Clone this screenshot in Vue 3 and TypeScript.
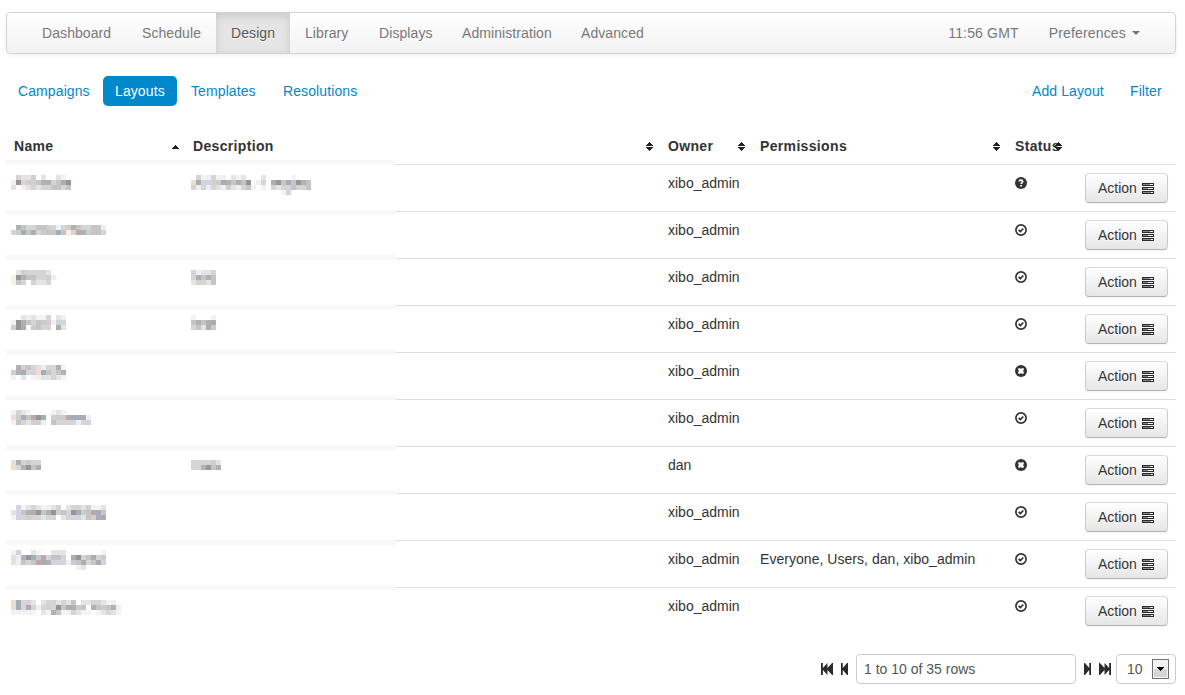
<script setup lang="ts">
interface NavItem { label: string; width: number; active?: boolean }
interface Row { owner: string; permissions: string; status: 'unknown' | 'ok' | 'error' }
interface Mosaic { col: number; row: number; lines: string[] }

const nav: NavItem[] = [
  { label: 'Dashboard', width: 100 },
  { label: 'Schedule', width: 89 },
  { label: 'Design', width: 74, active: true },
  { label: 'Library', width: 74 },
  { label: 'Displays', width: 83 },
  { label: 'Administration', width: 119 },
  { label: 'Advanced', width: 93 },
]
const pills: NavItem[] = [
  { label: 'Campaigns', width: 95 },
  { label: 'Layouts', width: 74, active: true },
  { label: 'Templates', width: 90 },
  { label: 'Resolutions', width: 98 },
]
const columns = [
  { label: 'Name', sort: 'asc' },
  { label: 'Description', sort: 'both' },
  { label: 'Owner', sort: 'both' },
  { label: 'Permissions', sort: 'both' },
  { label: 'Status', sort: 'both' },
  { label: '', sort: '' },
]
const row = (status: Row['status'], owner = 'xibo_admin', permissions = ''): Row => ({ owner, permissions, status })
const rows: Row[] = [
  row('unknown'), row('ok'), row('ok'), row('ok'), row('error'), row('ok'),
  row('error', 'dan'), row('ok'), row('ok', 'xibo_admin', 'Everyone, Users, dan, xibo_admin'), row('ok'),
]

// Obscured names and descriptions, one character per 5px cell.
const palette: Record<string, string> = {
  '1': '#f3f3f3', '2': '#e4e4e5', '3': '#d4d5d6', '4': '#c5c5c6', '5': '#b1b1b2', '6': '#979599',
  r: '#b9a9a8', b: '#a5adb7', p: '#ecdfd1', l: '#d5d3df', w: '#f6f0eb', k: '#d6cccc', g: '#c9cec8', s: '#e9f0f8',
}
const mosaics: Mosaic[] = [
  { col: 1, row: 3, lines: ['.322k.2..21.', 'w6lkk45534r6', '2.w2l2334434'] },
  { col: 37, row: 3, lines: ['.31s3ws.212...2.....1...', 'pb3lkgb54r46.w3.r64b4654', '3w3s32sk2s341.1.323l4334', '..................13....'] },
  { col: 1, row: 13, lines: ['.543344kls3k543344s', '3gb4r3g44b4w3r5g443'] },
  { col: 1, row: 22, lines: ['.2k33332.', 'w654433ks', 'w43.3223.'] },
  { col: 37, row: 22, lines: ['3s223', '35454', '23324'] },
  { col: 1, row: 31, lines: ['..2s2113.2s', 'w65434gks3l', 'k6b.g433.52'] },
  { col: 37, row: 31, lines: ['1...1', '4545b', '342rg'] },
  { col: 1, row: 41, lines: ['.5k4lps3351', 'k5bllpb4345', '1.2.1w22321'] },
  { col: 1, row: 50, lines: ['w321....w21.....', 'pgb4r6b.kggrbbrs', 'w432kks.43333s3l'] },
  { col: 1, row: 60, lines: ['pb3g33', 'p3564b'] },
  { col: 37, row: 60, lines: ['33llk2', '335645'] },
  { col: 1, row: 69, lines: ['.l12321s23.2332k112', '2l45r6456g436bg4rb4', '1l3k33233.233l24kbb'] },
  { col: 1, row: 78, lines: ['13..21..222.......1', 'ps56b4rl443.r634rlg', 'ps434rb5l33sg4r34b3', '.............w2....'] },
  { col: 1, row: 88, lines: ['pb332.2332l24.223321s.', 'pblr3s3kl64r5g4.54g45s', 'w1111.2154113211.12321'] },
]
const cells = mosaics.flatMap((m) =>
  m.lines.flatMap((line, y) =>
    [...line].map((c, x) => ({ x: m.col + x, y: m.row + y, fill: palette[c] })).filter((c) => c.fill),
  ),
)
const bands = [0, 10, 19, 29, 38, 47, 57, 66, 76, 85]
</script>

<template>
  <div class="page">
    <header class="navbar">
      <nav class="menu">
        <a v-for="n in nav" :key="n.label" :class="['menu-item', { active: n.active }]" :style="{ width: n.width + 'px' }">{{ n.label }}</a>
      </nav>
      <div class="menu menu-right">
        <span class="clock">11:56 GMT</span>
        <a class="prefs">Preferences <i class="caret"></i></a>
      </div>
    </header>

    <div class="subnav">
      <a v-for="p in pills" :key="p.label" :class="['pill', { active: p.active }]" :style="{ width: p.width + 'px' }">{{ p.label }}</a>
      <span class="spacer"></span>
      <a class="pill add">Add Layout</a>
      <a class="pill filter">Filter</a>
    </div>

    <section class="table">
      <div class="tr head">
        <div v-for="c in columns" :key="c.label" class="th">
          <span>{{ c.label }}</span>
          <svg v-if="c.sort" class="sort" width="7" height="9" viewBox="0 0 7 9" shape-rendering="crispEdges">
            <path v-if="c.sort === 'asc'" d="M3 3h1v1h1v1h1v1h1v1H0V6h1V5h1V4h1z" />
            <path v-else d="M3 0h1v1h1v1h1v1h1v1H0V3h1V2h1V1h1zM0 5h7v1H6v1H5v1H4v1H3V8H2V7H1V6H0z" />
          </svg>
        </div>
      </div>
      <div v-for="(r, i) in rows" :key="i" class="tr">
        <div class="td"></div>
        <div class="td"></div>
        <div class="td">{{ r.owner }}</div>
        <div class="td perms">{{ r.permissions }}</div>
        <div class="td">
          <svg class="status" width="12" height="12" viewBox="0 0 12 12">
            <template v-if="r.status === 'unknown'">
              <circle cx="6" cy="6" r="6" fill="#333" />
              <path d="M4.2 4.5C4.3 2.6 7.7 2.6 7.7 4.6C7.7 5.8 6.1 5.7 6.1 7" fill="none" stroke="#fff" stroke-width="1.6" />
              <path d="M5.2 8h1.8v1.5H5.2z" fill="#fff" />
            </template>
            <template v-else-if="r.status === 'ok'">
              <circle cx="6" cy="6" r="5.1" fill="#fff" stroke="#333" stroke-width="1.7" />
              <path d="M3.6 6L5.4 7.5L8.3 4.5" fill="none" stroke="#333" stroke-width="1.7" />
            </template>
            <template v-else>
              <circle cx="6" cy="6" r="6" fill="#333" />
              <path d="M3 4l1-1 2 .8 2-.8 1 1-.8 2 .8 2-1 1-2-.8-2 .8-1-1 .8-2z" fill="#fff" />
            </template>
          </svg>
        </div>
        <div class="td actions">
          <button class="btn">Action
            <svg width="12" height="11" viewBox="0 0 12 11" shape-rendering="crispEdges">
              <path d="M0 0h12v3H0zM0 4h12v3H0zM0 8h12v3H0z" fill="#2b2b2b" />
              <path d="M1 1h7v1H1zM1 5h5v1H1zM1 9h8v1H1z" fill="#858585" />
              <path d="M8 1h3v1H8zM6 5h5v1H6zM9 9h2v1H9z" fill="#f4f4f4" />
            </svg>
          </button>
        </div>
      </div>
      <svg class="redacted" width="390" height="470" viewBox="0 0 78 94" shape-rendering="crispEdges">
        <rect width="78" height="94" fill="#fff" />
        <rect v-for="b in bands" :key="b" :y="b" width="78" height="1" fill="#f8f8f8" />
        <rect v-for="(c, i) in cells" :key="'c' + i" :x="c.x" :y="c.y" width="1" height="1" :fill="c.fill" />
      </svg>
    </section>

    <footer class="pager">
      <svg class="first" width="12" height="12" viewBox="0 0 13 12" preserveAspectRatio="none"><path d="M0 0h2v5l5-5v5l5-5h1v12h-1L7 7v5L2 7v5H0z" /></svg>
      <svg class="prev" width="7" height="12" viewBox="0 0 8 12" preserveAspectRatio="none"><path d="M0 0h2v5l5-5h1v12H7L2 7v5H0z" /></svg>
      <div class="range">1 to 10 of 35 rows</div>
      <svg class="next" width="7" height="12" viewBox="0 0 8 12" preserveAspectRatio="none"><path d="M8 0H6v5L1 0H0v12h1l5-5v5h2z" /></svg>
      <svg class="last" width="12" height="12" viewBox="0 0 13 12" preserveAspectRatio="none"><path d="M13 0h-2v5L6 0v5L1 0H0v12h1l5-5v5l5-5v5h2z" /></svg>
      <div class="size">10
        <span class="drop"><svg width="7" height="4" viewBox="0 0 7 4" shape-rendering="crispEdges"><path d="M0 0h7v1H6v1H5v1H4v1H3V3H2V2H1V1H0z" fill="#000" /></svg></span>
      </div>
    </footer>
  </div>
</template>

<style>
body { background: #fff; overflow: hidden; }
</style>

<style scoped>
.page { box-sizing: border-box; width: 1185px; height: 695px; padding: 12px 9px 0 6px; font: 14px/20px "Liberation Sans", Arial, sans-serif; color: #333; }
.navbar { box-sizing: border-box; height: 42px; display: flex; justify-content: space-between; padding-left: 20px; border: 1px solid #d4d4d4; border-radius: 4px; background: linear-gradient(#fff, #f2f2f2); box-shadow: 0 1px 4px rgba(0, 0, 0, .065); color: #777; text-shadow: 0 1px 0 #fff; }
.menu { display: flex; }
.menu-item { box-sizing: border-box; padding: 10px 0 10px 15px; white-space: nowrap; letter-spacing: .08px; }
.menu-item.active { background: #e5e5e5; color: #555; box-shadow: inset 0 3px 8px rgba(0, 0, 0, .125); }
.menu-right { padding: 10px 35px 0 0; gap: 30px; letter-spacing: .16px; }
.caret { display: inline-block; margin: 0 0 3px 2px; border: 4px solid transparent; border-top-color: #777; border-bottom: 0; }
.subnav { display: flex; height: 30px; margin-top: 22px; color: #08c; }
.pill { box-sizing: border-box; padding: 5px 0 5px 12px; margin-right: 2px; white-space: nowrap; letter-spacing: .1px; }
.pill.active { border-radius: 5px; background: #08c; color: #fff; }
.spacer { flex: 1; }
.pill.add { width: 96px; }
.pill.filter { width: 58px; margin-right: 0; }
.table { position: relative; margin-top: 22px; }
.tr { display: grid; grid-template-columns: 179px 475px 92px 255px 62px 107px; box-sizing: border-box; height: 47px; border-top: 1px solid #ddd; }
.tr.head { height: 36px; border-top: 0; font-weight: bold; letter-spacing: .34px; }
.th { display: flex; align-items: center; justify-content: space-between; padding: 0 7px 0 8px; min-width: 0; }
.th:first-child { padding-right: 6px; }
.th span { width: 0; white-space: nowrap; }
.td { padding: 8px; white-space: nowrap; }
.perms { letter-spacing: .04px; }
.sort { flex: none; fill: #222; }
.status { display: block; margin-top: 4px; }
.td.actions { display: flex; justify-content: flex-end; }
.btn { box-sizing: border-box; display: flex; align-items: center; gap: 5px; width: 83px; height: 30px; padding: 0 0 0 12px; border: 1px solid #ccc; border-color: #dadada #ccc #b3b3b3; border-radius: 4px; background: linear-gradient(#fff, #e6e6e6); box-shadow: inset 0 1px 0 rgba(255, 255, 255, .2), 0 1px 2px rgba(0, 0, 0, .05); color: #333; font: inherit; text-shadow: 0 1px 1px rgba(255, 255, 255, .75); }
.redacted { position: absolute; left: 0; top: 32px; }
.pager { display: flex; align-items: center; height: 30px; margin-top: 20px; color: #555; fill: #2b2b2b; }
.pager > * { flex: none; }
.first { margin-left: 815px; }
.prev { margin-left: 8px; }
.range { box-sizing: border-box; width: 220px; height: 30px; margin: 0 8px; padding: 4px 7px; border: 1px solid #ccc; border-radius: 4px; }
.last { margin: 0 5px 0 8px; }
.size { box-sizing: border-box; display: flex; justify-content: space-between; width: 60px; height: 30px; padding: 4px 6px 4px 10px; border: 1px solid #ccc; border-radius: 4px; }
.drop { box-sizing: border-box; display: flex; align-items: center; justify-content: center; width: 17px; height: 20px; border: 1px solid #707070; background: linear-gradient(#f2f2f2 50%, #d5d5d5 50%); box-shadow: inset 0 0 0 1px #f5f5f5; }
</style>
